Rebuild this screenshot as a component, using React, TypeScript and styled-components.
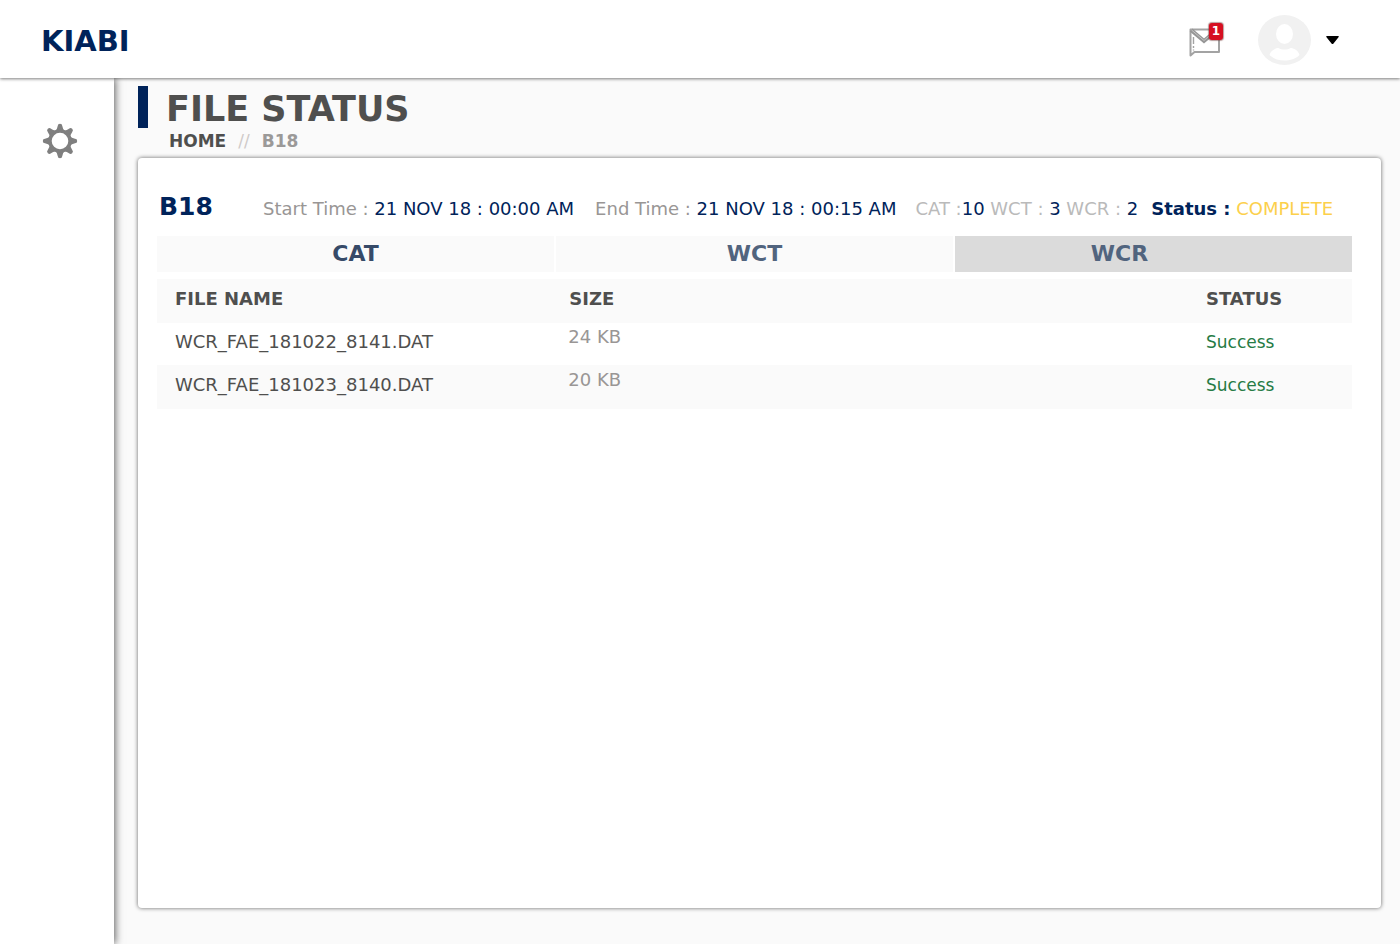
import React from "react";
import styled, { createGlobalStyle } from "styled-components";

const NAVY = "#00235a";

const GlobalStyle = createGlobalStyle`
  *, *::before, *::after { box-sizing: border-box; }
  body {
    margin: 0;
    background: #fafafa;
    color: #4f4f4e;
    font-family: "DejaVu Sans", Verdana, sans-serif;
    font-size: 18px;
    line-height: 22px;
  }
  button { font: inherit; border: 0; padding: 0; background: none; cursor: pointer; }
  a { color: inherit; text-decoration: none; }
  svg { display: block; }
`;

const Page = styled.div`
  min-height: 100vh;
  display: flex;
  flex-direction: column;
`;

const Header = styled.header`
  position: relative;
  z-index: 2;
  height: 78px;
  padding: 2px 60px 0 41px;
  display: flex;
  align-items: center;
  justify-content: space-between;
  background: #fff;
  box-shadow: 0 1px 3px rgba(0, 0, 0, 0.5);
`;

const Logo = styled.a`
  padding-top: 2px;
  color: ${NAVY};
  font-size: 29px;
  font-weight: bold;
  line-height: 32px;
`;

const HeaderActions = styled.div`
  display: flex;
  align-items: center;
`;

const MailButton = styled.button`
  position: relative;
  margin: 2px 36px 0 0;
`;

const Badge = styled.span`
  position: absolute;
  top: -2px;
  right: -1px;
  width: 14px;
  height: 17px;
  border-radius: 3px;
  background: #d60f21;
  box-shadow: 0 0 1px 1px rgba(120, 60, 60, 0.5);
  color: #fff;
  font-size: 12px;
  font-weight: bold;
  line-height: 17px;
  text-align: center;
`;

const ProfileButton = styled.button`
  display: flex;
  align-items: center;
  gap: 14px;
`;

const Body = styled.div`
  flex: 1;
  display: flex;
`;

const Sidebar = styled.nav`
  position: relative;
  z-index: 1;
  flex: 0 0 114px;
  padding: 45px 0 0 42px;
  background: #fff;
  box-shadow: 1px 0 8px rgba(0, 0, 0, 0.65);
`;

const Main = styled.main`
  flex: 1;
  min-width: 0;
  padding: 8px 19px 36px 24px;
  display: flex;
  flex-direction: column;
`;

const Title = styled.h1`
  margin: 0;
  padding: 4px 0 0 18px;
  border-left: 10px solid ${NAVY};
  font-size: 35px;
  line-height: 38px;
`;

const Breadcrumb = styled.nav`
  padding: 2px 0 6px 31px;
  display: flex;
  gap: 12px;
  font-size: 17px;
  font-weight: bold;
`;

const Separator = styled.span`
  color: #cfcac9;
  font-weight: normal;
`;

const Current = styled.span`
  color: #9b9998;
`;

const Panel = styled.section`
  flex: 1;
  padding: 34px 29px 34px 19px;
  border-radius: 4px;
  background: #fff;
  box-shadow: 0 0 4px rgba(0, 0, 0, 0.6);
`;

const Summary = styled.div`
  display: flex;
  align-items: baseline;
  height: 44px;
  padding-left: 2px;
  white-space: nowrap;
`;

const JobName = styled.h2`
  flex: 0 0 104px;
  margin: 0;
  color: ${NAVY};
  font-size: 25px;
  line-height: 30px;
`;

const Field = styled.span<{ $gap: number; $light?: boolean }>`
  margin-right: ${(p) => p.$gap}px;
  color: ${(p) => (p.$light ? "#bababa" : "#999695")};
`;

const Value = styled.span`
  color: ${NAVY};
`;

const State = styled.span`
  color: #fcd04b;
`;

const Tabs = styled.div`
  display: grid;
  grid-template-columns: repeat(3, 1fr);
  gap: 2px;
  margin-bottom: 7px;
`;

const Tab = styled.button<{ $active?: boolean; $strong?: boolean }>`
  height: 36px;
  padding-right: ${(p) => (p.$active ? 68 : 0)}px;
  background: ${(p) => (p.$active ? "#dbdbdb" : "#fafafa")};
  color: ${(p) => (p.$strong ? "#364a68" : "#51647e")};
  font-size: 22px;
  font-weight: bold;
`;

const Table = styled.table`
  width: 100%;
  table-layout: fixed;
  border-collapse: collapse;
  text-align: left;
`;

const HeadCell = styled.th<{ $width?: string }>`
  width: ${(p) => p.$width || "auto"};
  height: 44px;
  padding: 0 0 4px 18px;
  background: #fafafa;
`;

const Row = styled.tr`
  height: 42px;
  &:nth-child(even) {
    height: 44px;
    background: #fafafa;
  }
`;

const Cell = styled.td`
  padding: 0 0 5px 18px;
`;

const SizeCell = styled(Cell)`
  padding-bottom: 14px;
  padding-left: 17px;
  color: #999695;
`;

const StatusCell = styled(Cell)`
  color: #267b45;
  font-size: 17px;
`;

const files = [
  { name: "WCR_FAE_181022_8141.DAT", size: "24 KB", status: "Success" },
  { name: "WCR_FAE_181023_8140.DAT", size: "20 KB", status: "Success" },
];

const MailIcon = () => (
  <svg width="34" height="32" viewBox="0 0 34 32" fill="none" stroke="#a3a3a3" aria-hidden="true">
    <path d="M2.500 4.500v26l4-3.500h24.500V4.500z" strokeWidth="2" strokeLinejoin="round" />
    <path d="M3 5l13 11 13-11" stroke="#969696" strokeWidth="4" />
    <path d="M3.500 5l12.500 10.500L28 5" stroke="#c4c4c4" strokeWidth="1" />
    <path d="M5.500 12v7M5.500 21v2M5.500 24.500v1" strokeWidth="1.400" />
  </svg>
);

const AvatarIcon = () => (
  <svg width="53" height="50" viewBox="0 0 53 50" aria-hidden="true">
    <ellipse cx="26.500" cy="25" rx="26.500" ry="25" fill="#f1f1f1" />
    <ellipse cx="26.500" cy="19" rx="8.500" ry="10" fill="#fff" />
    <path d="M11.500 40c1-4.500 6.500-7 9-7 3 2 9 2 12 0 3 0 8 2.500 9 7-4 4-9.500 5.500-15 5.500s-11-1.500-15-5.500z" fill="#fff" />
  </svg>
);

const GearIcon = () => (
  <svg width="36" height="36" viewBox="-18 -18 36 36" fill="#7f7f7f" aria-hidden="true">
    {[0, 45, 90, 135, 180, 225, 270, 315].map((angle) => (
      <path
        key={angle}
        transform={`rotate(${angle})`}
        d="M-5-10Q-2.700-11.500-2.300-15Q-2.200-17.200 0-17.200T2.300-15Q2.700-11.500 5-10z"
      />
    ))}
    <circle r="9.900" fill="none" stroke="#7f7f7f" strokeWidth="3.200" />
  </svg>
);

export default function App() {
  return (
    <Page>
      <GlobalStyle />
      <Header>
        <Logo href="#">KIABI</Logo>
        <HeaderActions>
          <MailButton aria-label="Messages">
            <MailIcon />
            <Badge>1</Badge>
          </MailButton>
          <ProfileButton aria-label="Account menu">
            <AvatarIcon />
            <svg width="15" height="10" viewBox="0 0 15 10" aria-hidden="true">
              <path d="M2 1h11q1.500 0 .5 1.200L8.500 8.500q-1 1-2 0L1.500 2.200Q.5 1 2 1z" />
            </svg>
          </ProfileButton>
        </HeaderActions>
      </Header>
      <Body>
        <Sidebar>
          <button aria-label="Settings">
            <GearIcon />
          </button>
        </Sidebar>
        <Main>
          <Title>FILE STATUS</Title>
          <Breadcrumb>
            <a href="#">HOME</a>
            <Separator>//</Separator>
            <Current>B18</Current>
          </Breadcrumb>
          <Panel>
            <Summary>
              <JobName>B18</JobName>
              <Field $gap={21}>
                Start Time : <Value>21 NOV 18 : 00:00 AM</Value>
              </Field>
              <Field $gap={19}>
                End Time : <Value>21 NOV 18 : 00:15 AM</Value>
              </Field>
              <Field $gap={13} $light>
                CAT :<Value>10</Value> WCT : <Value>3</Value> WCR : <Value>2</Value>
              </Field>
              <Value>
                <b>Status :</b> <State>COMPLETE</State>
              </Value>
            </Summary>
            <Tabs>
              <Tab $strong>CAT</Tab>
              <Tab>WCT</Tab>
              <Tab $active>WCR</Tab>
            </Tabs>
            <Table>
              <thead>
                <tr>
                  <HeadCell $width="33%">FILE NAME</HeadCell>
                  <HeadCell>SIZE</HeadCell>
                  <HeadCell $width="164px">STATUS</HeadCell>
                </tr>
              </thead>
              <tbody>
                {files.map((file) => (
                  <Row key={file.name}>
                    <Cell>{file.name}</Cell>
                    <SizeCell>{file.size}</SizeCell>
                    <StatusCell>{file.status}</StatusCell>
                  </Row>
                ))}
              </tbody>
            </Table>
          </Panel>
        </Main>
      </Body>
    </Page>
  );
}
